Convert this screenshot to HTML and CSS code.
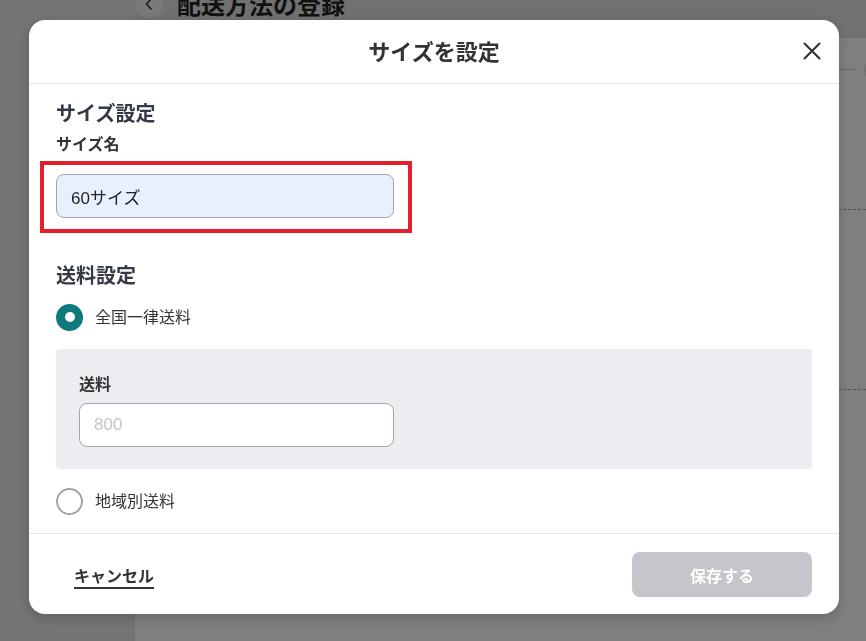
FILE: index.html
```html
<!DOCTYPE html>
<html lang="ja">
<head>
<meta charset="utf-8">
<title>配送方法の登録</title>
<link rel="stylesheet" href="styles.css">
</head>
<body>
<div class="page">
  <aside class="sidebar"></aside>
  <main class="main">
    <div class="topbar">
      <div class="topbar-inner">
        <span class="back">
          <svg width="10" height="12" viewBox="0 0 10 12"><path d="M7 1 L2.5 6 L7 11" fill="none" stroke="#333" stroke-width="1.6" stroke-linecap="round" stroke-linejoin="round"/></svg>
        </span>
        <h1 class="page-title">配送方法の登録</h1>
      </div>
    </div>
    <div class="content">
      <div class="search-row">
        <span class="search-field"></span>
        <span class="search-btn"></span>
      </div>
      <div class="section section-a"></div>
      <div class="section section-b"></div>
    </div>
  </main>
</div>

<div class="overlay">
  <div class="modal" role="dialog">
    <header class="modal-header">
      <span></span>
      <h2 class="modal-title">サイズを設定</h2>
      <button class="close" type="button" aria-label="閉じる">
        <svg width="18" height="18" viewBox="0 0 18 18"><path d="M1.5 1.5 L16.5 16.5 M16.5 1.5 L1.5 16.5" fill="none" stroke="#333" stroke-width="2.1" stroke-linecap="round"/></svg>
      </button>
    </header>
    <div class="modal-body">
      <h3 class="section-title">サイズ設定</h3>
      <div class="field-label">サイズ名</div>
      <div class="highlight">
        <input class="text-input filled" type="text" value="60サイズ">
      </div>
      <h3 class="section-title second">送料設定</h3>
      <label class="radio-row">
        <span class="radio checked"></span>
        <span class="radio-label">全国一律送料</span>
      </label>
      <div class="fee-box">
        <div class="field-label fee-label">送料</div>
        <input class="text-input fee-input" type="text" placeholder="800">
      </div>
      <label class="radio-row last">
        <span class="radio"></span>
        <span class="radio-label">地域別送料</span>
      </label>
    </div>
    <footer class="modal-footer">
      <button class="cancel" type="button">キャンセル</button>
      <button class="save" type="button" disabled>保存する</button>
    </footer>
  </div>
</div>
</body>
</html>
```

FILE: styles.css
```css
* { box-sizing: border-box; }

html, body {
  margin: 0;
  width: 866px;
  height: 641px;
  overflow: hidden;
}

body {
  font-family: "Noto Sans CJK JP", "Noto Sans", sans-serif;
  color: #333;
}

/* underlying page */
.page {
  display: grid;
  grid-template-columns: 135px 1fr;
  height: 641px;
}

.sidebar {
  background: #e8e8e8;
}

.main {
  background: #fff;
  display: flex;
  flex-direction: column;
  overflow: hidden;
}

.topbar {
  height: 38px;
  background: #e2e2e2;
  display: flex;
  align-items: flex-start;
  flex: none;
}

.topbar-inner {
  display: flex;
  align-items: center;
  gap: 14px;
  height: 28px;
  margin-top: -10px;
}

.back {
  width: 28px;
  height: 28px;
  border-radius: 50%;
  background: #f3f3f3;
  display: flex;
  align-items: center;
  justify-content: center;
}

.page-title {
  margin: 0;
  font-size: 24px;
  line-height: 28px;
  font-weight: 700;
  color: #222;
}

.content {
  display: flex;
  flex-direction: column;
}

.search-row {
  display: flex;
  align-items: flex-end;
  height: 32px;
  padding-left: 24px;
  margin-right: -24px;
}

.search-field {
  flex: 1;
  border-bottom: 1px solid #cccccc;
}

.search-btn {
  flex: none;
  width: 26px;
  height: 26px;
  border-radius: 50%;
  background: #f2f2f2;
  border: 1px solid #dddddd;
  margin-left: 7px;
  margin-bottom: -13px;
}

.section {
  margin-left: 24px;
  border-bottom: 1px dashed #aaaaaa;
}

.section-a { height: 140px; }
.section-b { height: 180px; }

/* modal */
.overlay {
  position: fixed;
  inset: 0;
  background: rgba(0, 0, 0, 0.5);
  display: flex;
  align-items: flex-start;
  justify-content: flex-start;
  padding: 20px 0 0 29px;
}

.modal {
  width: 810px;
  height: 594px;
  background: #fff;
  border-radius: 16px;
  box-shadow: 0 4px 14px rgba(0, 0, 0, 0.18);
  display: flex;
  flex-direction: column;
  overflow: hidden;
}

.modal-header {
  flex: none;
  height: 64px;
  border-bottom: 1px solid #e4e4e6;
  display: grid;
  grid-template-columns: 1fr auto 1fr;
  align-items: center;
  padding: 0 18px 1px;
}

.modal-title {
  margin: 0 0 3px;
  font-size: 22px;
  line-height: 30px;
  font-weight: 700;
  color: #333;
}

.close {
  justify-self: end;
  width: 18px;
  height: 18px;
  padding: 0;
  border: 0;
  background: none;
  display: flex;
  cursor: pointer;
}

.modal-body {
  flex: 1;
  padding: 15px 27px 16px;
  display: flex;
  flex-direction: column;
}

.section-title {
  margin: 0;
  font-size: 20px;
  line-height: 28px;
  font-weight: 700;
  color: #343945;
}

.section-title.second {
  margin-top: 28px;
}

.field-label {
  margin: 4px 0 6px;
  font-size: 16px;
  line-height: 24px;
  font-weight: 700;
  color: #333;
}

.highlight {
  width: fit-content;
  margin-left: -16px;
  padding: 9px 14px 11px 12px;
  border: 4px solid #e5202a;
}

.text-input {
  display: block;
  width: 338px;
  height: 44px;
  padding: 0 14px;
  border: 1px solid #a3a6ad;
  border-radius: 8px;
  background: #fff;
  font-family: "Liberation Sans", "Noto Sans CJK JP", sans-serif;
  font-size: 17px;
  color: #222;
  outline: none;
}

.text-input.fee-input {
  width: 315px;
}

.text-input.filled {
  background: #e8f0fe;
}

.text-input::placeholder {
  color: #c1c5cc;
}

.radio-row {
  display: flex;
  align-items: center;
  gap: 12px;
  height: 32px;
  margin-top: 12px;
}

.radio-row.last {
  margin-top: 16px;
}

.radio {
  width: 27px;
  height: 27px;
  border-radius: 50%;
  border: 2px solid #a0a3aa;
  background: #fff;
  display: flex;
  align-items: center;
  justify-content: center;
  flex: none;
}

.radio.checked {
  border: 0;
  background: #0e7a7c;
}

.radio.checked::after {
  content: "";
  width: 10px;
  height: 10px;
  border-radius: 50%;
  background: #fff;
}

.radio-label {
  font-size: 16px;
  line-height: 24px;
  color: #333;
  margin-top: -2px;
}

.fee-box {
  margin-top: 16px;
  background: #ecedf1;
  border-radius: 4px;
  padding: 22px 23px;
}

.fee-label {
  margin: 0 0 8px;
}

.modal-footer {
  flex: none;
  height: 81px;
  border-top: 1px solid #e4e4e6;
  display: flex;
  justify-content: space-between;
  align-items: flex-start;
  padding: 18px 27px 0;
}

.cancel {
  height: 45px;
  padding: 0 18px;
  border: 0;
  background: none;
  font-family: inherit;
  font-size: 16px;
  font-weight: 700;
  color: #333;
  text-decoration: underline;
  text-decoration-thickness: 1.5px;
  text-underline-offset: 5px;
  cursor: pointer;
}

.save {
  width: 180px;
  height: 45px;
  border: 0;
  border-radius: 8px;
  background: #c5c6cb;
  font-family: inherit;
  font-size: 16px;
  font-weight: 700;
  color: #fff;
}
```
